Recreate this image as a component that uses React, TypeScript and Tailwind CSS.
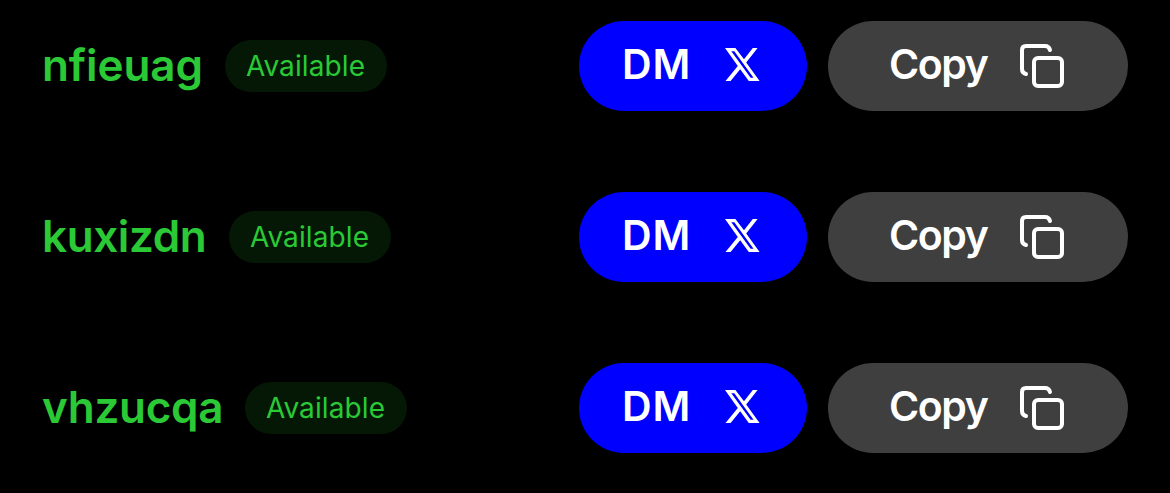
const rows = [
  { name: "nfieuag", style: "w-[162px] tracking-[-0.1px]" },
  { name: "kuxizdn", style: "w-[166px] tracking-[-0.4px]" },
  { name: "vhzucqa", style: "w-[182px] tracking-[-0.25px]" },
];

function XLogo() {
  return (
    <svg width="35" height="33" viewBox="0 0 35 33" aria-hidden="true" className="block shrink-0">
      <path fill="white" fillRule="evenodd" d="M0 0H10.4L19 11.3L27.8 0H32.6L21.2 14.4L34.6 33H23.8L15.2 21.2L5.6 33H.5L12.8 18ZM6.3 3.2L25.6 29.8H28.5L9.3 3.2Z" />
    </svg>
  );
}

function CopyIcon() {
  return (
    <svg width="44" height="44" viewBox="0 0 44 44" fill="none" stroke="white" strokeWidth="4" strokeLinecap="round" strokeLinejoin="round" aria-hidden="true" className="shrink-0">
      <rect x="14" y="14" width="28" height="28" rx="4" />
      <path d="M6 30Q2 29 2 25V6Q2 2 6 2H25Q29 2 30 6" />
    </svg>
  );
}

export default function App() {
  return (
    <main className="flex h-[493px] w-[1170px] flex-col gap-[81px] overflow-hidden bg-black pt-[21px] font-['Inter',sans-serif]">
      {rows.map((row) => (
        <div key={row.name} className="flex h-[90px] shrink-0 items-center pl-[42px] pr-[42px]">
          <span className={`${row.style} shrink-0 whitespace-nowrap pb-0.5 text-[44px] font-semibold text-[#2bc936]`}>{row.name}</span>
          <span className="ml-[21px] flex h-[52px] w-[162px] items-center justify-center rounded-full bg-[#051805] pr-px text-[28px] tracking-[0.1px] text-[#2bc936]">Available</span>
          <button className="ml-auto flex h-[90px] w-[228px] items-center rounded-full bg-[#0000ff] pb-[3px] pl-[43px] text-[41px] font-semibold text-white">
            <span className="w-[103px] text-left tracking-[0.8px]">DM</span><XLogo />
          </button>
          <button className="ml-[21px] flex h-[90px] w-[300px] items-center rounded-full bg-[#3f3f3f] pl-[61px] text-[41px] font-semibold text-white">
            <span className="w-[131px] pb-[3px] text-left tracking-[-1.4px]">Copy</span><CopyIcon />
          </button>
        </div>
      ))}
    </main>
  );
}
